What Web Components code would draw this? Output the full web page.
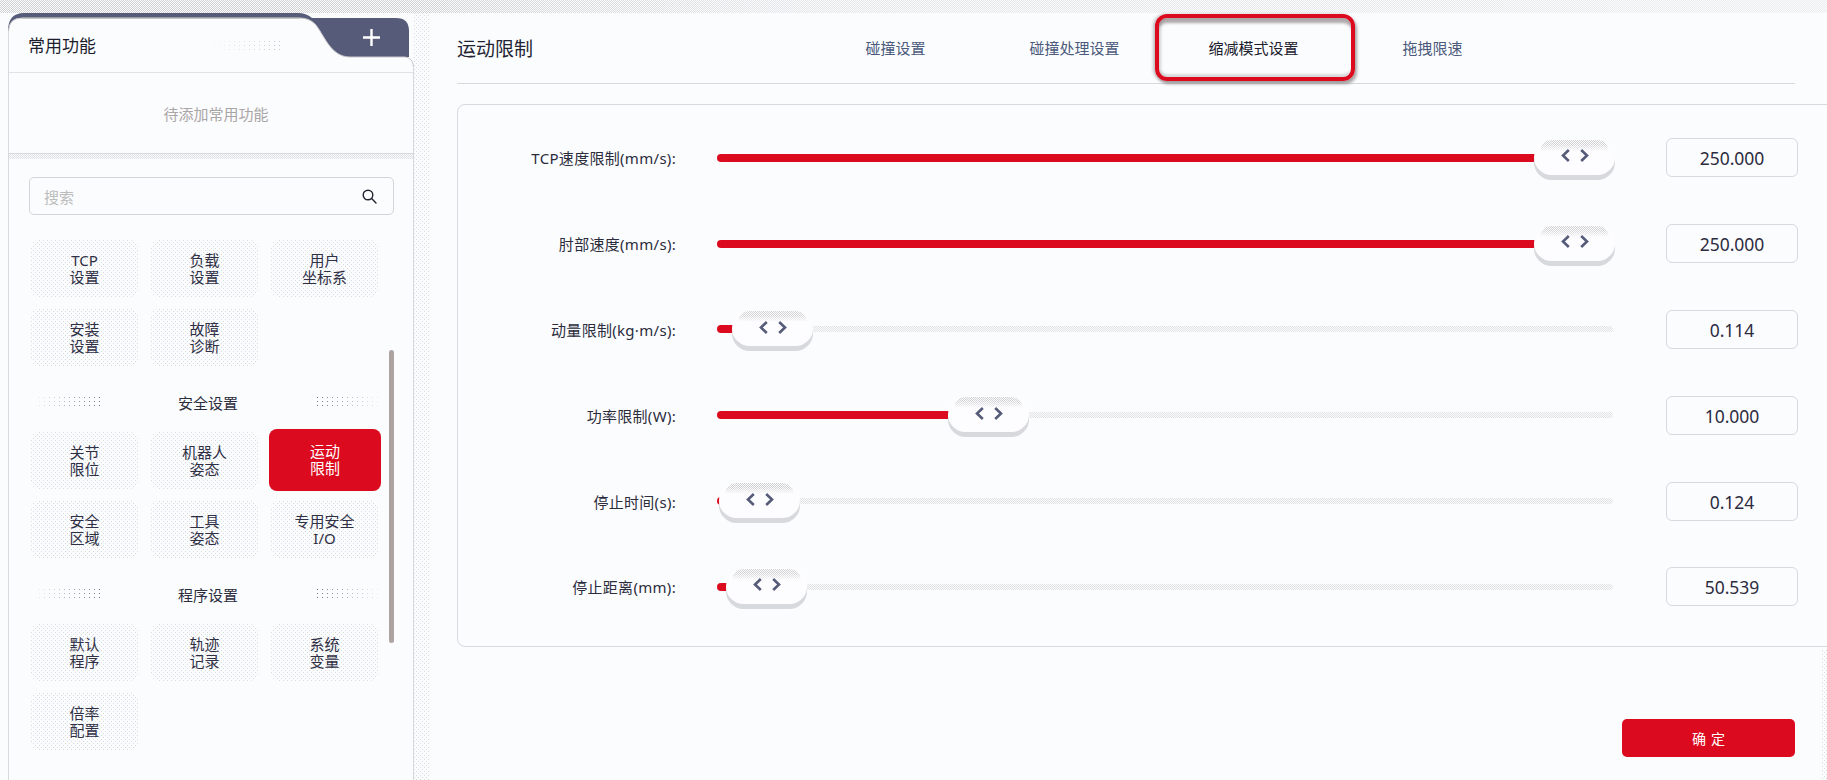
<!DOCTYPE html>
<html lang="zh-CN">
<head>
<meta charset="utf-8">
<title>运动限制</title>
<style>
  html, body { margin: 0; height: 100%; overflow: hidden; }
  body {
    width: 1827px; height: 780px;
    background: #fbfcfe; color: #2b2c3c;
    font-family: "Noto Sans", "Noto Sans CJK SC", sans-serif;
    font-size: 15px;
  }
</style>
</head>
<body>
<robot-app>
  <app-sidebar slot="side">
    <func-tile>TCP<br>设置</func-tile>
    <func-tile>负载<br>设置</func-tile>
    <func-tile>用户<br>坐标系</func-tile>
    <func-tile>安装<br>设置</func-tile>
    <func-tile>故障<br>诊断</func-tile>
    <func-section>安全设置</func-section>
    <func-tile>关节<br>限位</func-tile>
    <func-tile>机器人<br>姿态</func-tile>
    <func-tile active>运动<br>限制</func-tile>
    <func-tile>安全<br>区域</func-tile>
    <func-tile>工具<br>姿态</func-tile>
    <func-tile>专用安全<br>I/O</func-tile>
    <func-section>程序设置</func-section>
    <func-tile>默认<br>程序</func-tile>
    <func-tile>轨迹<br>记录</func-tile>
    <func-tile>系统<br>变量</func-tile>
    <func-tile>倍率<br>配置</func-tile>
  </app-sidebar>
  <motion-panel slot="main" heading="运动限制">
    <tab-item slot="tabs">碰撞设置</tab-item>
    <tab-item slot="tabs">碰撞处理设置</tab-item>
    <tab-item slot="tabs" active>缩减模式设置</tab-item>
    <tab-item slot="tabs">拖拽限速</tab-item>
    <slider-row label="TCP速度限制(mm/s):" value="250.000" pos="817"></slider-row>
    <slider-row label="肘部速度(mm/s):" value="250.000" pos="817"></slider-row>
    <slider-row label="动量限制(kg·m/s):" value="0.114" pos="15"></slider-row>
    <slider-row label="功率限制(W):" value="10.000" pos="231"></slider-row>
    <slider-row label="停止时间(s):" value="0.124" pos="2"></slider-row>
    <slider-row label="停止距离(mm):" value="50.539" pos="9"></slider-row>
  </motion-panel>
</robot-app>

<script>
// 小圆点纹理，几个组件共用
const DOTS = "radial-gradient(circle at .5px .5px, #d9dade .65px, transparent .65px) 0 0/4px 4px, radial-gradient(circle at 2.5px 2.5px, #d9dade .65px, transparent .65px) 0 0/4px 4px";
const CHECK = "conic-gradient(#d2d2d4 25%, transparent 0 50%, #d2d2d4 0 75%, transparent 0) 0 0/2px 2px";

class RobotApp extends HTMLElement {
  constructor() {
    super();
    this.attachShadow({ mode: "open" });
    this.shadowRoot.innerHTML = `
      <style>
        :host { display: block; width: 1827px; height: 780px; overflow: hidden; }
        .top {
          height: 13px;
          background: ${CHECK};
          -webkit-mask-image: linear-gradient(90deg, #000 0, #000 420px, rgba(0,0,0,.55) 760px, rgba(0,0,0,.35) 100%);
          mask-image: linear-gradient(90deg, #000 0, #000 420px, rgba(0,0,0,.55) 760px, rgba(0,0,0,.35) 100%);
        }
        .row { display: flex; height: 767px; }
        .gutter { width: 16px; margin-right: 27px; background: ${DOTS}; }
        .edge { width: 5px; margin-left: auto; background: ${DOTS}; margin-top: 637px; }
      </style>
      <div class="top"></div>
      <div class="row">
        <slot name="side"></slot>
        <div class="gutter"></div>
        <slot name="main"></slot>
        <div class="edge"></div>
      </div>`;
  }
}

class AppSidebar extends HTMLElement {
  constructor() {
    super();
    this.attachShadow({ mode: "open" });
    this.shadowRoot.innerHTML = `
      <style>
        :host { display: block; width: 406px; margin-left: 8px; flex: none; position: relative; }
        .fav { position: relative; height: 141px; box-sizing: border-box; border-bottom: 1px solid #d8d9dd; }
        .fav svg.shape { position: absolute; left: 0; top: 0; }
        .fav .side { position: absolute; left: 0; top: 18px; bottom: 0; width: 1px; background: #d8d9dd; }
        .fav .side.r { left: auto; right: 0; top: 54px; }
        .title { position: absolute; left: 20px; top: 20px; font-size: 17px; line-height: 26px; color: #1d1e2e; }
        .fav dot-strip { position: absolute; left: 205px; top: 27px; }
        .plus { position: absolute; left: 355px; top: 16px; }
        .empty { position: absolute; left: 10px; right: 0; top: 90px; text-align: center; color: #aaa6a6; line-height: 22px; }
        .body {
          height: 626px; box-sizing: border-box; position: relative;
          border-left: 1px solid #d8d9dd; border-right: 1px solid #d8d9dd;
          padding: 0 20px 0 20px;
        }
        .dither { height: 5px; margin: 0 -20px 18px; background: ${CHECK}; opacity: .65; }
        .search {
          position: relative; height: 38px; box-sizing: border-box; width: 365px;
          border: 1px solid #d4d5d9; border-radius: 5px;
          display: flex; align-items: center; justify-content: space-between; padding: 0 16px 0 14px;
          color: #bdbcbc;
        }
        .grid {
          position: relative;
          display: grid; grid-template-columns: repeat(3, 107px); column-gap: 13px; row-gap: 12px;
          grid-template-rows: 57px 57px 42px 57px 57px 42px 57px 57px; margin: 25px 0 0 2px;
        }
        .bar {
          position: absolute; left: 380px; top: 196px; width: 5px; height: 293px;
          background: #ada4a2; border-radius: 3px;
        }
      </style>
      <div class="fav">
        <svg class="shape" width="406" height="60" viewBox="0 0 406 60">
          <path d="M0 18 Q0 0 16 0 H290 Q298 0 304 5 H388 Q401 5 401 18 V44 H330 Z" fill="#555b78"/>
          <path d="M.5 60 V18 Q1 5 14 5 H292 Q301 5 307 11 C316 21 322 44 342 44 H397 Q405 45 405.5 54 V60 Z" fill="#fbfcfe" stroke="#c9c9cc"/>
          <path d="M14 5 H292" stroke="#a9a6a6" fill="none"/>
        </svg>
        <div class="side"></div><div class="side r"></div>
        <div class="title">常用功能</div>
        <dot-strip dir="up" w="68"></dot-strip>
        <svg class="plus" width="17" height="17" viewBox="0 0 17 17"><path d="M8.5 0 V17 M0 8.5 H17" stroke="#fff" stroke-width="2.4"/></svg>
        <div class="empty">待添加常用功能</div>
      </div>
      <div class="body">
        <div class="dither"></div>
        <div class="search">
          <span>搜索</span>
          <svg width="15" height="15" viewBox="0 0 15 15" fill="none" stroke="#23222e" stroke-width="1.4"><circle cx="6" cy="6" r="4.8"/><path d="M9.6 9.6 L14 14" stroke-linecap="round"/></svg>
        </div>
        <div class="grid"><slot></slot></div>
        <div class="bar"></div>
      </div>`;
  }
}

class DotStrip extends HTMLElement {
  constructor() {
    super();
    this.attachShadow({ mode: "open" });
  }
  connectedCallback() {
    const w = this.getAttribute("w") || 62;
    const dir = this.getAttribute("dir");
    const angle = dir === "down" ? "270deg" : "90deg";
    const col = dir === "up" ? "#c4c5ca" : "#6f7086";
    this.shadowRoot.innerHTML = `
      <style>
        :host { display: block; width: ${w}px; height: 12px; }
        div {
          height: 100%;
          background: radial-gradient(circle at 1.5px 1.5px, ${col} .9px, transparent .9px) 0 0/5px 4px;
          -webkit-mask-image: linear-gradient(${angle}, rgba(0,0,0,.1), #000);
          mask-image: linear-gradient(${angle}, rgba(0,0,0,.1), #000);
        }
      </style><div></div>`;
  }
}

class FuncTile extends HTMLElement {
  constructor() {
    super();
    this.attachShadow({ mode: "open" });
    this.shadowRoot.innerHTML = `
      <style>
        :host {
          display: flex; align-items: center; justify-content: center; text-align: center;
          font-size: 15px; line-height: 17px; color: #2f3045; border-radius: 8px;
          background: ${DOTS};
        }
        :host([active]) {
          background: #dc0a1e; color: #fff; margin: -3px -3px -2px -2px; border-radius: 8px;
        }
      </style><span><slot></slot></span>`;
  }
}

class FuncSection extends HTMLElement {
  constructor() {
    super();
    this.attachShadow({ mode: "open" });
    this.shadowRoot.innerHTML = `
      <style>
        :host {
          grid-column: 1 / -1; height: 42px; display: flex; align-items: center;
          justify-content: space-between; padding: 7px 0 0 7px; box-sizing: border-box;
          color: #2b2c3c; line-height: 20px;
        }
        dot-strip { position: relative; top: -1px; }
      </style>
      <dot-strip dir="right" w="62"></dot-strip>
      <span><slot></slot></span>
      <dot-strip dir="down" w="62"></dot-strip>`;
  }
}

class MotionPanel extends HTMLElement {
  constructor() {
    super();
    this.attachShadow({ mode: "open" });
  }
  connectedCallback() {
    this.shadowRoot.innerHTML = `
      <style>
        :host { display: block; width: 1340px; flex: none; }
        header {
          width: 1338px;
          height: 71px; display: flex; align-items: center; box-sizing: border-box; padding-bottom: 1px;
          border-bottom: 1px solid #d8d9dd;
        }
        h2 { margin: 0; font-weight: 400; font-size: 19px; width: 349px; color: #232433; }
        nav { display: flex; }
        .card {
          margin-top: 20px; width: 1400px; height: 543px; box-sizing: border-box;
          border: 1px solid #d8d9dd; border-radius: 8px; padding-top: 10px;
        }
        footer { display: flex; justify-content: flex-end; margin-top: 72px; padding-right: 2px; }
        button {
          width: 173px; height: 38px; border: 0; border-radius: 5px; background: #dc0a1e; color: #fff;
          font: inherit; font-size: 14px; letter-spacing: 5px; padding: 0 0 0 5px;
        }
      </style>
      <header>
        <h2>${this.getAttribute("heading")}</h2>
        <nav><slot name="tabs"></slot></nav>
      </header>
      <div class="card"><slot></slot></div>
      <footer><button type="button">确定</button></footer>`;
  }
}

class TabItem extends HTMLElement {
  constructor() {
    super();
    this.attachShadow({ mode: "open" });
    this.shadowRoot.innerHTML = `
      <style>
        :host {
          display: flex; align-items: center; justify-content: center; width: 179px; height: 40px;
          color: #4c5a7c; position: relative;
        }
        :host([active]) { color: #20202c; }
        .mark { display: none; }
        :host([active]) .mark {
          display: block; position: absolute; left: -9px; right: -12px; top: -14px; bottom: -13px;
          box-sizing: border-box; border: 4px solid #dc0a1e; border-radius: 12px;
          box-shadow: 2px 3px 3px rgba(90,80,80,.5), -2px 0 3px rgba(90,80,80,.35), inset 0 7px 3px -2px rgba(120,110,110,.6), inset 0 -5px 2px -2px rgba(180,180,180,.45), inset 4px 0 3px -2px rgba(150,150,150,.4);
        }
      </style>
      <div class="mark"></div><span><slot></slot></span>`;
  }
}

class SliderRow extends HTMLElement {
  constructor() {
    super();
    this.attachShadow({ mode: "open" });
  }
  connectedCallback() {
    const pos = Number(this.getAttribute("pos"));
    this.shadowRoot.innerHTML = `
      <style>
        :host { display: flex; align-items: center; height: 85.8px; }
        .label { width: 218px; text-align: right; color: #2b2c3c; white-space: nowrap; letter-spacing: .3px; }
        .track { position: relative; width: 896px; margin: 0 53px 0 41px; height: 8px; }
        .rail { position: absolute; left: 0; right: 0; top: 1px; height: 6px; border-radius: 3px; background: ${CHECK}; opacity: .6; }
        .fill { position: absolute; left: 0; top: 0; height: 8px; width: ${pos + 8}px; background: #dc0a1e; border-radius: 4px 0 0 4px; }
        .thumb {
          position: absolute; left: ${pos}px; top: -14px; width: 81px; height: 35px;
          background: #fdfdff; border-radius: 18px; box-shadow: 0 5px 0 #d8d9dc;
          display: flex; align-items: center; justify-content: center; gap: 10px; padding-bottom: 3px; box-sizing: border-box;
        }
        .thumb::before {
          content: ""; position: absolute; left: 6px; right: 6px; top: 0; height: 11px;
          border-radius: 14px 14px 0 0; background: ${CHECK};
          -webkit-mask-image: linear-gradient(#000 40%, transparent);
          mask-image: linear-gradient(#000 40%, transparent);
        }
        svg { position: relative; }
        .num {
          width: 132px; height: 39px; box-sizing: border-box; flex: none;
          border: 1px solid #d8d9dd; border-radius: 6px; text-align: center;
          font-size: 17.5px; line-height: 39px; color: #2d2c3e;
        }
      </style>
      <div class="label">${this.getAttribute("label")}</div>
      <div class="track">
        <div class="rail"></div>
        <div class="fill"></div>
        <div class="thumb">
          <svg width="9" height="13" viewBox="0 0 9 13" fill="none" stroke="#555b78" stroke-width="2.6"><path d="M7.8 1 L2 6.5 L7.8 12"/></svg>
          <svg width="9" height="13" viewBox="0 0 9 13" fill="none" stroke="#555b78" stroke-width="2.6"><path d="M1.2 1 L7 6.5 L1.2 12"/></svg>
        </div>
      </div>
      <div class="num">${this.getAttribute("value")}</div>`;
  }
}

customElements.define("dot-strip", DotStrip);
customElements.define("func-tile", FuncTile);
customElements.define("func-section", FuncSection);
customElements.define("tab-item", TabItem);
customElements.define("slider-row", SliderRow);
customElements.define("motion-panel", MotionPanel);
customElements.define("app-sidebar", AppSidebar);
customElements.define("robot-app", RobotApp);
</script>
</body>
</html>
